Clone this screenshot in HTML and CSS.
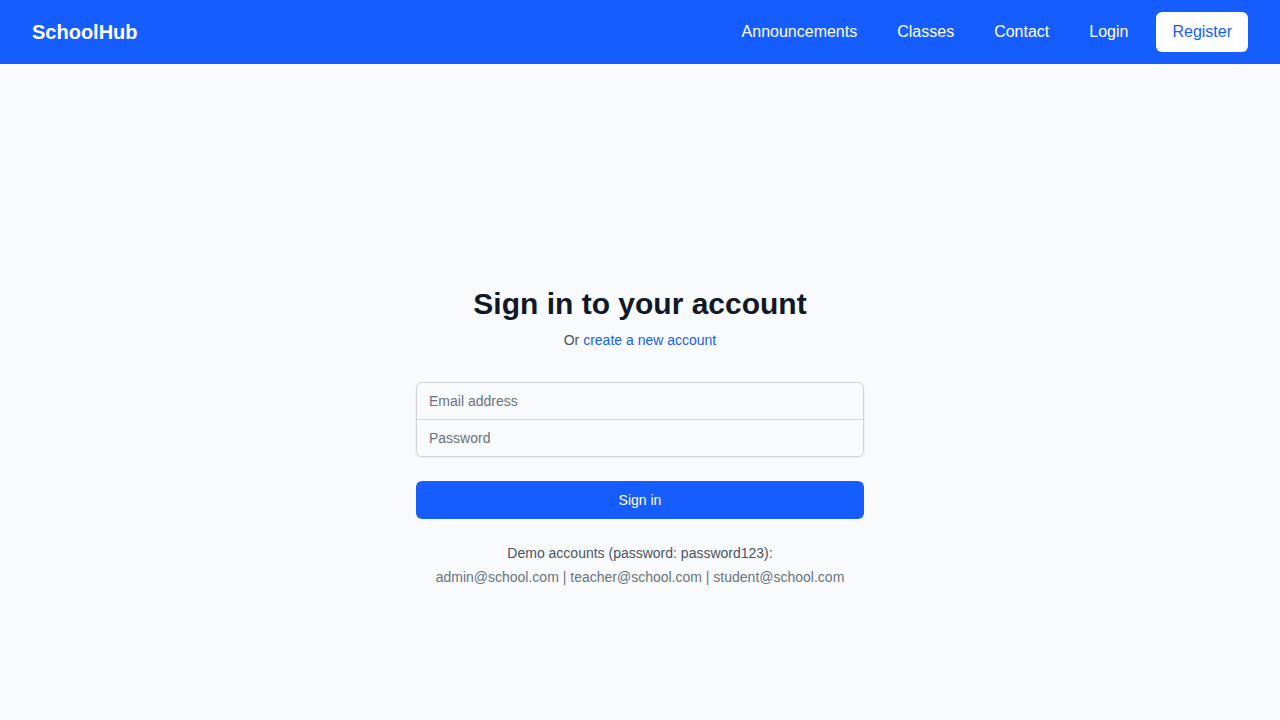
FILE: index.html
```html
<!DOCTYPE html>
<html lang="en">
<head>
    <meta charset="UTF-8">
    <meta name="viewport" content="width=device-width, initial-scale=1.0">
    <title>SchoolHub - Sign in</title>
    <link rel="stylesheet" href="styles.css">
</head>
<body>
    <nav class="navbar">
        <a href="#" class="brand">SchoolHub</a>
        <div class="nav_links">
            <a href="#">Announcements</a>
            <a href="#">Classes</a>
            <a href="#">Contact</a>
            <a href="#">Login</a>
            <a href="#" class="btn_register">Register</a>
        </div>
    </nav>

    <main class="login_page">
        <div class="login_box">
            <h2 class="login_title">Sign in to your account</h2>
            <p class="login_sub">Or <a href="#">create a new account</a></p>

            <form class="login_form" action="#">
                <div class="field_group">
                    <input type="email" name="email" placeholder="Email address">
                    <input type="password" name="password" placeholder="Password">
                </div>
                <button type="submit" class="btn_signin">Sign in</button>
            </form>

            <div class="demo">
                <p class="demo_title">Demo accounts (password: password123):</p>
                <p class="demo_list">admin@school.com | teacher@school.com | student@school.com</p>
            </div>
        </div>
    </main>
</body>
</html>
```

FILE: styles.css
```css
* {
    box-sizing: border-box;
}
body {
    margin: 0;
    font-family: "Liberation Sans", Arial, sans-serif;
    background-color: #f8fafc;
    color: #111827;
}
a {
    text-decoration: none;
}

/* top bar */
.navbar {
    height: 64px;
    background-color: #165dff;
    display: flex;
    align-items: center;
    justify-content: space-between;
    padding: 0 32px;
}
.brand {
    color: #fff;
    font-size: 20px;
    font-weight: bold;
}
.nav_links {
    display: flex;
    align-items: center;
}
.nav_links a {
    color: #fff;
    font-size: 16px;
    padding: 8px 20px;
    line-height: 24px;
}
.nav_links .btn_register {
    margin-left: 8px;
    background-color: #fff;
    color: #165dff;
    border-radius: 6px;
    padding: 8px 16px;
}

/* sign in */
.login_page {
    display: flex;
    justify-content: center;
    padding-top: 222px;
}
.login_box {
    width: 448px;
    text-align: center;
}
.login_title {
    margin: 0;
    font-size: 30px;
    line-height: 36px;
    font-weight: bold;
    color: #111827;
}
.login_sub {
    margin: 8px 0 0;
    font-size: 14px;
    line-height: 20px;
    color: #4b5563;
}
.login_sub a {
    color: #165dff;
}
.login_form {
    margin-top: 32px;
}
.field_group {
    border-radius: 6px;
    box-shadow: 0 1px 2px rgba(0, 0, 0, 0.08);
}
.field_group input {
    display: block;
    width: 100%;
    height: 38px;
    padding: 8px 12px;
    font-family: inherit;
    font-size: 14px;
    color: #111827;
    background-color: #f8fafc;
    border: 1px solid #d1d5db;
}
.field_group input::placeholder {
    color: #6b7280;
}
.field_group input:first-child {
    border-radius: 6px 6px 0 0;
}
.field_group input:last-child {
    margin-top: -1px;
    border-radius: 0 0 6px 6px;
}
.btn_signin {
    display: block;
    width: 100%;
    height: 38px;
    margin-top: 24px;
    border: none;
    border-radius: 6px;
    background-color: #165dff;
    color: #fff;
    font-family: inherit;
    font-size: 14px;
    cursor: pointer;
}
.demo {
    margin-top: 24px;
    font-size: 14px;
    line-height: 20px;
}
.demo p {
    margin: 0;
}
.demo_title {
    color: #4b5563;
}
.demo_list {
    margin-top: 4px !important;
    color: #6b7280;
}
```
